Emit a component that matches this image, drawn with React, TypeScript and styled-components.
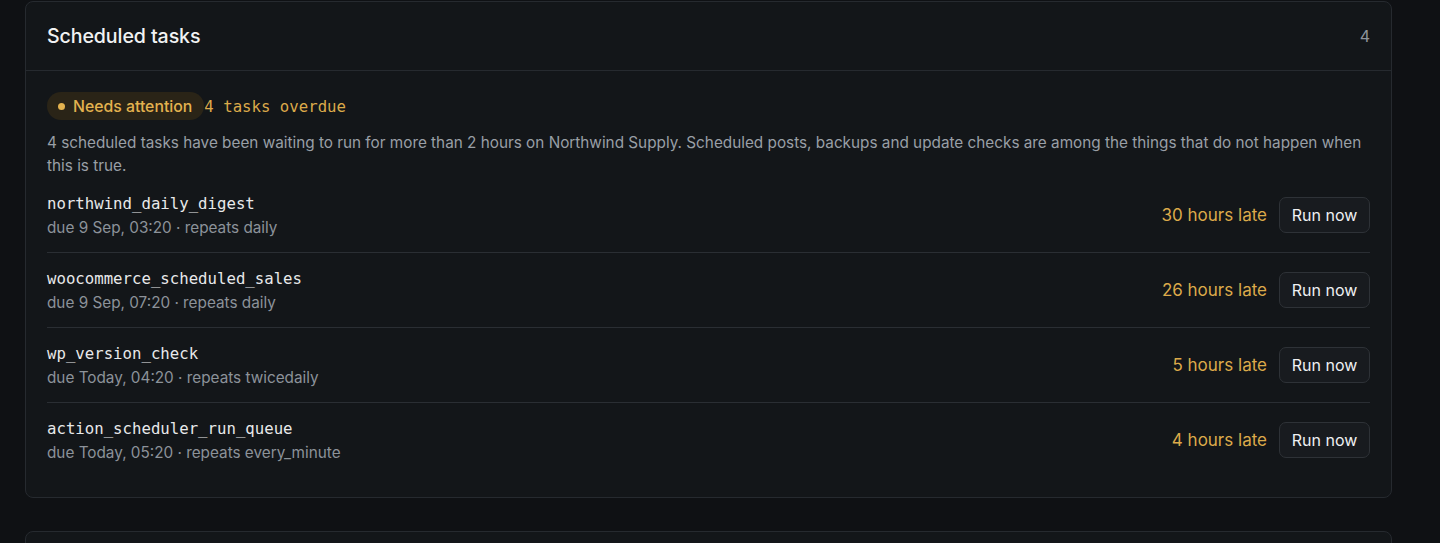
import React from "react";
import styled, { createGlobalStyle } from "styled-components";

const GlobalStyle = createGlobalStyle`
  html, body { margin: 0; padding: 0; background: #0f1114; }
  body { font-family: Inter, "Noto Sans", sans-serif; -webkit-font-smoothing: antialiased; }
  * { box-sizing: border-box; }
`;

const Page = styled.div`
  width: 1440px;
  height: 543px;
  overflow: hidden;
  background: #0f1114;
  padding: 1px 48px 0 25px;
  display: flex;
  flex-direction: column;
  gap: 33px;
`;

const Card = styled.section`
  background: #131619;
  border: 1px solid #262a2f;
  border-radius: 8px;
  flex-shrink: 0;
`;

const Header = styled.header`
  height: 69px;
  display: flex;
  align-items: center;
  justify-content: space-between;
  padding: 0 21px 1px;
  border-bottom: 1px solid #262a2f;
`;

const Title = styled.h2`
  margin: 0;
  font-size: 19.6px;
  font-weight: 500;
  color: #f1f2f3;
  letter-spacing: -0.1px;
`;

const Count = styled.span`
  font-size: 16px;
  color: #8e949b;
`;

const Body = styled.div`
  padding: 21px 21px 20px;
`;

const StatusLine = styled.div`
  display: flex;
  align-items: center;
  gap: 0;
  height: 28px;
`;

const Badge = styled.span`
  display: inline-flex;
  align-items: center;
  gap: 8px;
  height: 28px;
  padding: 0 12px 0 11px;
  border-radius: 14px;
  background: #2a2417;
  color: #e3b24f;
  font-size: 15.8px;
  font-weight: 500;
`;

const Dot = styled.span`
  width: 7px;
  height: 7px;
  border-radius: 50%;
  background: #e3b24f;
`;

const Mono = styled.span`
  font-family: "DejaVu Sans Mono", "Liberation Mono", monospace;
  font-size: 15.7px;
  color: ${(p: { tone?: string }) => p.tone || "#e8e9ea"};
`;

const Description = styled.p`
  margin: 11px 0 0;
  font-size: 15.3px;
  line-height: 23px;
  color: #999fa6;
  max-width: 1322px;
`;

const TaskList = styled.div`
  display: flex;
  flex-direction: column;
`;

const TaskRow = styled.div`
  height: 75px;
  display: flex;
  align-items: center;
  justify-content: space-between;
  border-top: 1px solid ${(p: { first?: boolean }) => (p.first ? "transparent" : "#2a2e33")};
`;

const TaskInfo = styled.div`
  display: flex;
  flex-direction: column;
  padding-top: 1px;
`;

const TaskName = styled(Mono)`
  line-height: 24px;
`;

const TaskMeta = styled.span`
  font-size: 15.3px;
  line-height: 24px;
  color: #8c9299;
`;

const TaskActions = styled.div`
  display: flex;
  align-items: center;
  gap: 12px;
`;

const Late = styled.span`
  font-size: 17px;
  color: #dcaa4a;
`;

const RunButton = styled.button`
  height: 36px;
  width: 91px;
  border-radius: 7px;
  border: 1px solid #2e3237;
  background: #181b1f;
  color: #eef0f2;
  font-family: Inter, "Noto Sans", sans-serif;
  font-size: 16px;
  font-weight: 400;
  padding: 0;
  cursor: pointer;
`;

const NextCard = styled(Card)`
  height: 60px;
`;

const tasks = [
  { name: "northwind_daily_digest", meta: "due 9 Sep, 03:20 · repeats daily", late: "30 hours late" },
  { name: "woocommerce_scheduled_sales", meta: "due 9 Sep, 07:20 · repeats daily", late: "26 hours late" },
  { name: "wp_version_check", meta: "due Today, 04:20 · repeats twicedaily", late: "5 hours late" },
  { name: "action_scheduler_run_queue", meta: "due Today, 05:20 · repeats every_minute", late: "4 hours late" },
];

export default function App() {
  return (
    <>
      <GlobalStyle />
      <Page>
        <Card>
          <Header>
            <Title>Scheduled tasks</Title>
            <Count>4</Count>
          </Header>
          <Body>
            <StatusLine>
              <Badge>
                <Dot />
                Needs attention
              </Badge>
              <Mono tone="#dcaa4a">4 tasks overdue</Mono>
            </StatusLine>
            <Description>
              4 scheduled tasks have been waiting to run for more than 2 hours on Northwind Supply. Scheduled posts,
              backups and update checks are among the things that do not happen when this is true.
            </Description>
            <TaskList>
              {tasks.map((t, i) => (
                <TaskRow key={t.name} first={i === 0}>
                  <TaskInfo>
                    <TaskName>{t.name}</TaskName>
                    <TaskMeta>{t.meta}</TaskMeta>
                  </TaskInfo>
                  <TaskActions>
                    <Late>{t.late}</Late>
                    <RunButton>Run now</RunButton>
                  </TaskActions>
                </TaskRow>
              ))}
            </TaskList>
          </Body>
        </Card>
        <NextCard />
      </Page>
    </>
  );
}
